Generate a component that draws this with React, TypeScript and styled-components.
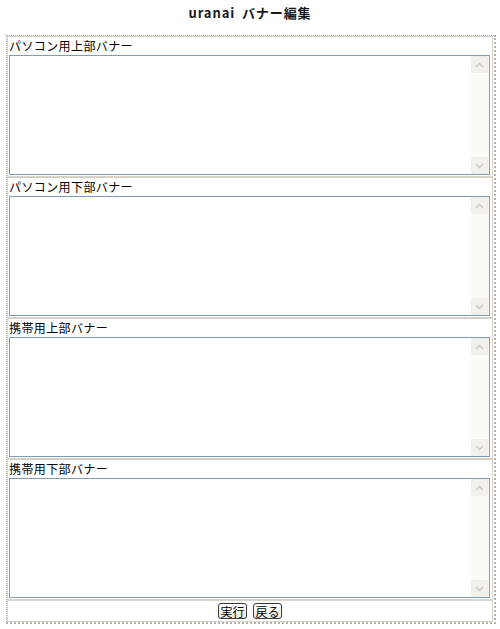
import React from "react";
import styled, { createGlobalStyle } from "styled-components";

const GlobalStyle = createGlobalStyle`
  html, body { margin: 0; padding: 0; background: #ffffff; }
  body { font-family: "Noto Sans CJK JP", "Noto Sans", sans-serif; color: #000; }
`;

const Title = styled.div`
  height: 35px;
  box-sizing: border-box;
  padding-top: 5px;
  text-align: center;
  font-size: 13px;
  line-height: 16px;
  font-weight: bold;
  letter-spacing: 0.9px;
  word-spacing: 3px;
  color: #1a1a1a;
`;

const Table = styled.div`
  margin-left: 6px;
  width: 490px;
  box-sizing: border-box;
  border-style: dotted;
  border-color: #b4b2aa;
  border-width: 1px 2px 2px 1px;
  padding: 0 1px 0 0;
  display: flex;
  flex-direction: column;
`;

const Cell = styled.div`
  border: 1px solid #d8d6cc;
  border-top-color: #cfccc0;
  padding: 0 2px 1px 1px;
  display: flex;
  flex-direction: column;
`;

const Label = styled.div`
  height: 18px;
  font-size: 12px;
  line-height: 18px;
  letter-spacing: 0.4px;
  white-space: nowrap;
`;

const Box = styled.div`
  height: 120px;
  box-sizing: border-box;
  border: 1px solid #7f9db9;
  display: flex;
  background: #fff;
`;

const Area = styled.textarea`
  flex: 1;
  border: none;
  outline: none;
  resize: none;
  padding: 2px;
  margin: 0;
  font-size: 12px;
  overflow: hidden;
  background: transparent;
`;

const Scroll = styled.div`
  width: 17px;
  background: #fbfbf8;
  display: flex;
  flex-direction: column;
  justify-content: space-between;
  padding: 0 1px 0 0;
`;

const Arrow = styled.div`
  height: 17px;
  box-sizing: border-box;
  border: 1px solid #eeede6;
  border-radius: 2px;
  background: #f2f1ea;
  display: flex;
  align-items: center;
  justify-content: center;
`;

const ButtonCell = styled.div`
  border: 1px solid #d8d6cc;
  height: 20px;
  display: flex;
  align-items: center;
  justify-content: center;
  gap: 6px;
`;

const Button = styled.button`
  height: 16px;
  width: 29px;
  padding: 0;
  margin: 0;
  box-sizing: border-box;
  border: 1px solid #3a3a3a;
  border-radius: 3px;
  background: linear-gradient(#ffffff, #ecebe4);
  font-family: "Noto Sans CJK JP", sans-serif;
  font-size: 12px;
  line-height: 13px;
  color: #000;
`;

const Chevron = ({ up }: { up?: boolean }) => (
  <svg width="9" height="6" viewBox="0 0 9 6">
    <path
      d={up ? "M1 5 L4.5 1.5 L8 5" : "M1 1 L4.5 4.5 L8 1"}
      fill="none"
      stroke="#cbcac2"
      strokeWidth="1.6"
    />
  </svg>
);

const Field = ({ label }: { label: string }) => (
  <Cell>
    <Label>{label}</Label>
    <Box>
      <Area />
      <Scroll>
        <Arrow>
          <Chevron up />
        </Arrow>
        <Arrow>
          <Chevron />
        </Arrow>
      </Scroll>
    </Box>
  </Cell>
);

export default function App() {
  return (
    <>
      <GlobalStyle />
      <Title>uranai バナー編集</Title>
      <Table>
        <Field label="パソコン用上部バナー" />
        <Field label="パソコン用下部バナー" />
        <Field label="携帯用上部バナー" />
        <Field label="携帯用下部バナー" />
        <ButtonCell>
          <Button>実行</Button>
          <Button>戻る</Button>
        </ButtonCell>
      </Table>
    </>
  );
}
